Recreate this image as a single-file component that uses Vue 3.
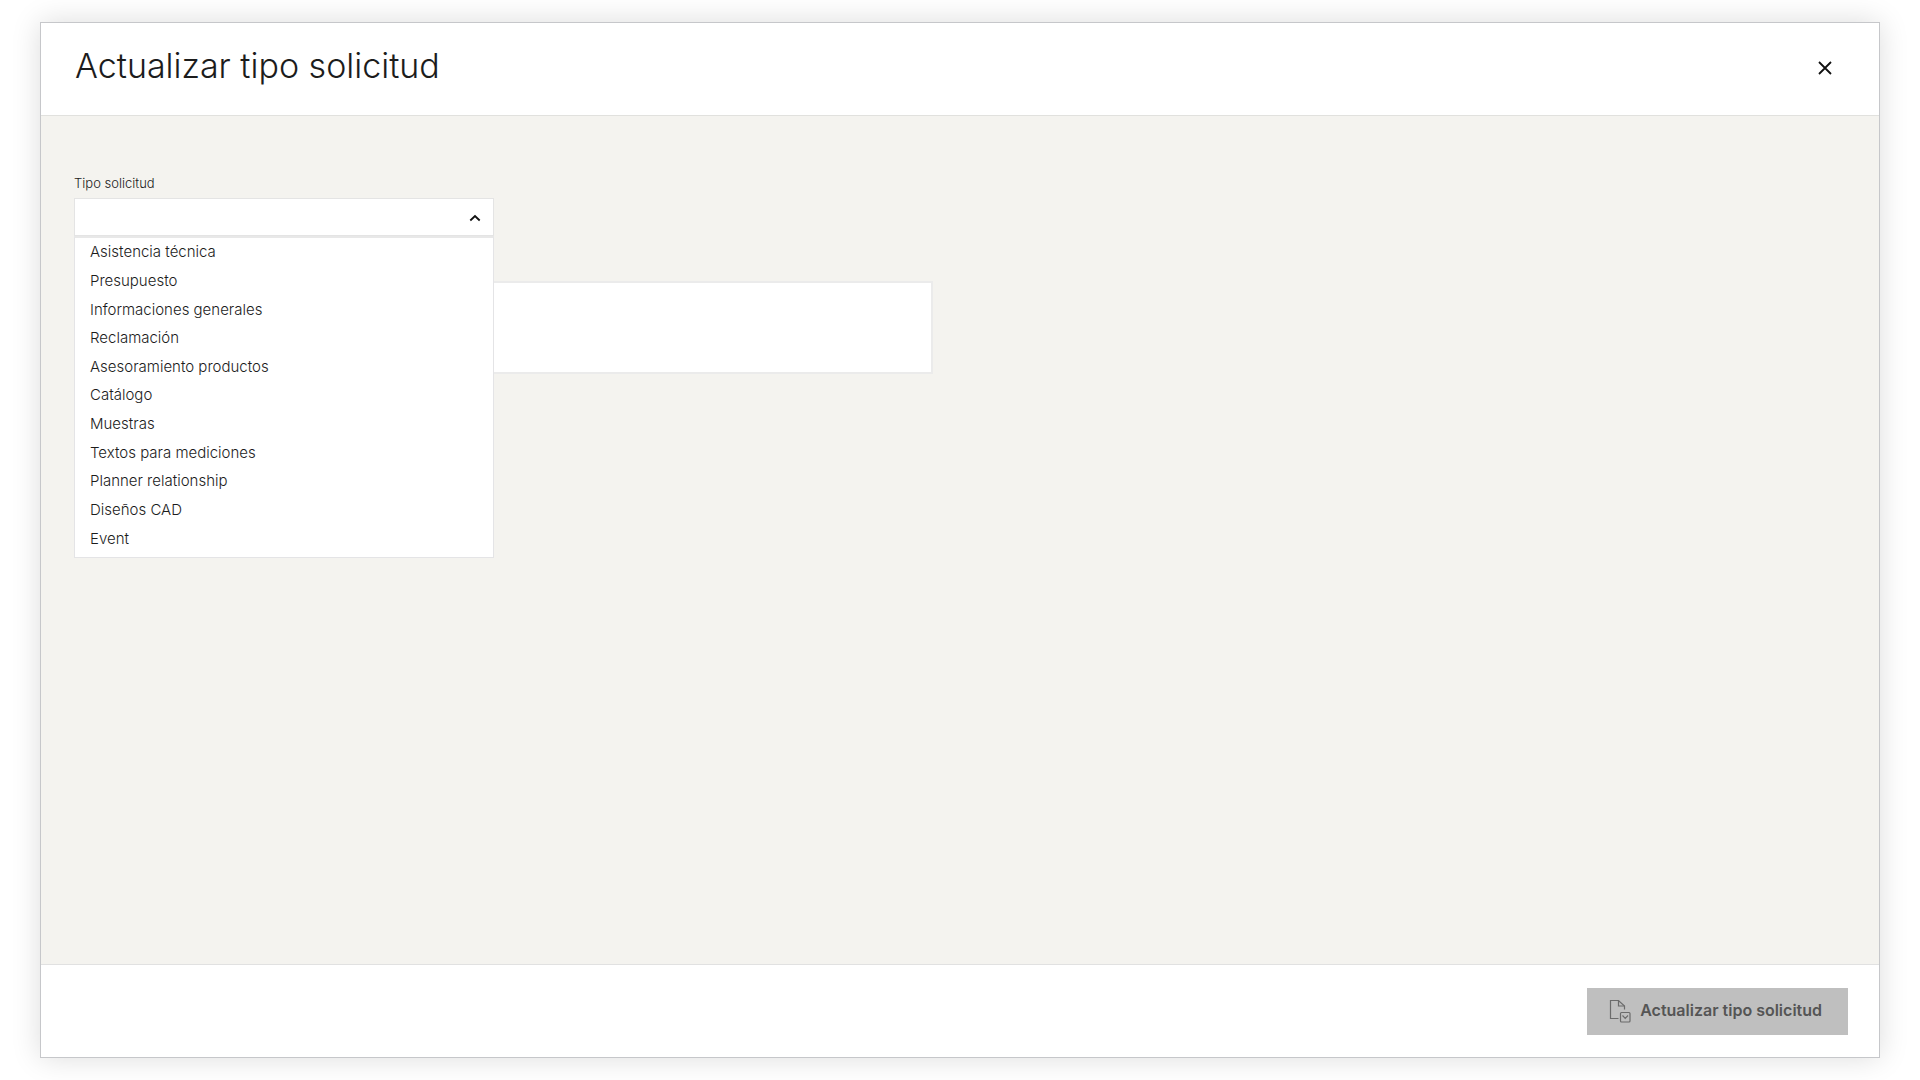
<script setup>
import { ref } from 'vue'

const types = [
  'Asistencia técnica',
  'Presupuesto',
  'Informaciones generales',
  'Reclamación',
  'Asesoramiento productos',
  'Catálogo',
  'Muestras',
  'Textos para mediciones',
  'Planner relationship',
  'Diseños CAD',
  'Event',
]

const selected = ref('')
const notes = ref('')
const open = ref(true)

function choose(type) {
  selected.value = type
  open.value = false
}
</script>

<template>
  <div class="page">
    <section class="dialog" role="dialog" aria-labelledby="dialog-title">
      <header class="head">
        <h1 id="dialog-title" class="title">Actualizar tipo solicitud</h1>
        <button class="close" type="button" aria-label="Cerrar">
          <svg width="14" height="14" viewBox="0 0 14 14" aria-hidden="true">
            <path d="M1 1 L13 13 M13 1 L1 13" fill="none" stroke="#111" stroke-width="1.8" />
          </svg>
        </button>
      </header>

      <main class="body">
        <div class="field">
          <label class="label" for="request-type">Tipo solicitud</label>
          <div class="picker">
            <select id="request-type" v-model="selected" class="select" @mousedown.prevent="open = !open">
              <option value=""></option>
              <option v-for="type in types" :key="type" :value="type">{{ type }}</option>
            </select>
            <svg class="chevron" :class="{ closed: !open }" width="12" height="8" viewBox="0 0 12 8" aria-hidden="true">
              <path d="M1.3 6.5 L6 2 L10.7 6.5" fill="none" stroke="#111" stroke-width="1.8" />
            </svg>
            <ul v-if="open" class="list" role="listbox" aria-label="Tipo solicitud">
              <li
                v-for="type in types"
                :key="type"
                class="item"
                role="option"
                :aria-selected="type === selected"
                @click="choose(type)"
              >
                {{ type }}
              </li>
            </ul>
          </div>
        </div>
        <textarea v-model="notes" class="notes" aria-label="Comentario"></textarea>
      </main>

      <footer class="foot">
        <button class="submit" type="submit" disabled>
          <svg width="22" height="24" viewBox="0 0 22 24" fill="none" stroke="#6b6b6b" stroke-width="1.2" aria-hidden="true">
            <path d="M9.5 19.5 H1.5 V1.5 H9.5 L15.5 7 V10.5" />
            <path d="M9.5 1.5 V7 H15.5" />
            <rect x="11.5" y="13.5" width="9.5" height="9.5" rx="1" />
            <path d="M13.5 16.5 L16.2 19.3 L19 16.5" />
          </svg>
          <span class="submit-text">Actualizar tipo solicitud</span>
        </button>
      </footer>
    </section>
  </div>
</template>

<style>
body {
  margin: 0;
  background: #fff;
}
</style>

<style scoped>
.page {
  box-sizing: border-box;
  display: flex;
  min-height: 100vh;
  padding: 22px 40px;
  font-family: Inter, "Liberation Sans", sans-serif;
  color: #1c1c1c;
}
.dialog {
  flex: 1;
  display: flex;
  flex-direction: column;
  border: 1px solid #c6c7ca;
  background: #fff;
  box-shadow: 0 0 28px rgba(0, 0, 0, 0.14);
}
.head {
  box-sizing: border-box;
  display: flex;
  align-items: center;
  justify-content: space-between;
  min-height: 93px;
  padding: 0 39px 2px 34px;
  border-bottom: 1px solid #e1e1de;
}
.title {
  margin: 0;
  padding-bottom: 4px;
  font-size: 34px;
  font-weight: 300;
  line-height: 40px;
}
.close {
  display: flex;
  align-items: center;
  justify-content: center;
  width: 30px;
  height: 30px;
  padding: 0;
  border: 0;
  background: none;
  cursor: pointer;
}
.body {
  flex: 1;
  display: flex;
  flex-direction: column;
  gap: 45px;
  padding: 56px 33px 40px;
  background: #f4f3ef;
}
.field {
  display: flex;
  flex-direction: column;
  gap: 4px;
  width: 420px;
  max-width: 100%;
}
.label {
  font-size: 13px;
  font-weight: 300;
  line-height: 22px;
}
.picker {
  position: relative;
}
.select {
  display: block;
  box-sizing: border-box;
  width: 100%;
  height: 38px;
  padding: 0 36px 0 14px;
  border: 1px solid #e4e4e4;
  border-radius: 0;
  appearance: none;
  background: #fff;
  color: inherit;
  font: 300 15px Inter, "Liberation Sans", sans-serif;
}
.chevron {
  position: absolute;
  top: 16px;
  right: 13px;
  pointer-events: none;
}
.chevron.closed {
  transform: rotate(180deg);
}
.list {
  position: absolute;
  top: 100%;
  left: 0;
  right: 0;
  z-index: 1;
  box-sizing: border-box;
  display: grid;
  grid-auto-rows: 1fr;
  min-height: 322px;
  margin: 0;
  padding: 0 0 4px;
  border: 1px solid #e4e4e6;
  border-top: 2px solid #e8e8e8;
  background: #fff;
  list-style: none;
}
.item {
  display: flex;
  align-items: center;
  padding: 0 15px;
  font-size: 15px;
  font-weight: 300;
  line-height: 20px;
  cursor: pointer;
}
.notes {
  box-sizing: border-box;
  width: 859px;
  max-width: 100%;
  height: 93px;
  padding: 12px 14px;
  border: 2px solid #ebebeb;
  resize: none;
  background: #fff;
  font: 300 15px Inter, "Liberation Sans", sans-serif;
}
.foot {
  box-sizing: border-box;
  display: flex;
  align-items: center;
  justify-content: flex-end;
  min-height: 93px;
  padding: 0 31px;
  border-top: 1px solid #e1e1e1;
}
.submit {
  display: flex;
  align-items: center;
  gap: 9px;
  height: 47px;
  padding: 0 26px 0 22px;
  border: 0;
  background: #bfbfbf;
  color: #555;
  font: 600 16px Inter, "Liberation Sans", sans-serif;
}
.submit-text {
  padding-bottom: 2px;
}
</style>
